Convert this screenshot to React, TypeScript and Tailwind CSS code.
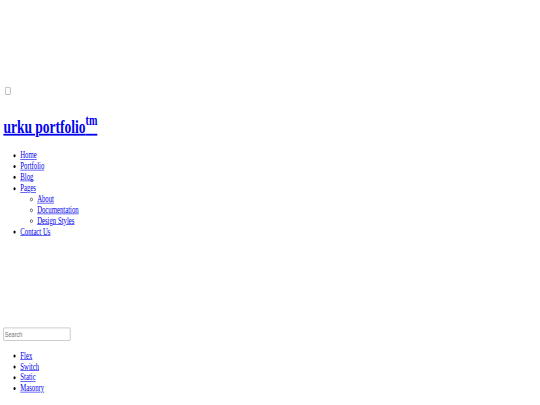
export default function App() {
    const mainLinks = ['Home', 'Portfolio', 'Blog'];
    const subLinks = ['About', 'Documentation', 'Design Styles'];
    const filters = ['Flex', 'Switch', 'Static', 'Masonry'];

    return (
        <div className="w-[540px] h-[405px] overflow-hidden bg-white">
            {/* page is laid out at 1280x675 and squeezed like the screenshot */}
            <div className="w-[1280px] h-[675px] origin-top-left scale-x-[0.421875] scale-y-[0.6] p-2 font-['Liberation_Serif','Times_New_Roman',serif] text-[16px] text-black">
                <input type="checkbox" className="block mt-[137px] ml-1 w-[13px] h-[13px]" />

                <h1 className="mt-[33.5px] text-[32px] leading-[36.8px] font-bold">
                    <a href="#" className="text-[#0000EE] underline">
                        urku portfolio<sup>tm</sup>
                    </a>
                </h1>

                <ul className="mt-[22px] pl-10 list-disc leading-[18.1px]">
                    {mainLinks.map((l) => (
                        <li key={l}>
                            <a href="#" className="text-[#0000EE] underline">{l}</a>
                        </li>
                    ))}
                    <li>
                        <a href="#" className="text-[#0000EE] underline">Pages</a>
                        <ul className="pl-10 list-[circle]">
                            {subLinks.map((l) => (
                                <li key={l}>
                                    <a href="#" className="text-[#0000EE] underline">{l}</a>
                                </li>
                            ))}
                        </ul>
                    </li>
                    <li>
                        <a href="#" className="text-[#0000EE] underline">Contact Us</a>
                    </li>
                </ul>

                <input
                    type="text"
                    placeholder="Search"
                    className="block mt-[151px] w-[159px] h-[22px] px-[2px] border border-[#9a9a9a] rounded-[2px] font-['Liberation_Sans',Arial,sans-serif] text-[13.33px] placeholder:text-[#757575]"
                />

                <ul className="mt-4 pl-10 list-disc leading-[18.1px]">
                    {filters.map((l) => (
                        <li key={l}>
                            <a href="#" className="text-[#0000EE] underline">{l}</a>
                        </li>
                    ))}
                </ul>
            </div>
        </div>
    );
}
